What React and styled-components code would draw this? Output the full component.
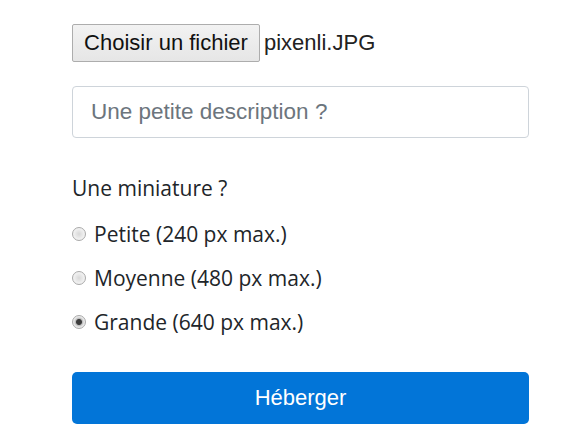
import styled, { createGlobalStyle } from "styled-components";

const Global = createGlobalStyle`
    html, body {
        margin: 0;
        padding: 0;
        background: #FFFFFF;
    }
`;

const sizes = [
    { id: "petite", label: "Petite (240 px max.)" },
    { id: "moyenne", label: "Moyenne (480 px max.)" },
    { id: "grande", label: "Grande (640 px max.)", checked: true }
];

export default function App() {
    return (
        <>
            <Global />
            <Form onSubmit={e => e.preventDefault()}>
                <FileRow>
                    <FileButton type="button">Choisir un fichier</FileButton>
                    <FileName>pixenli.JPG</FileName>
                </FileRow>
                <Description placeholder="Une petite description ?" />
                <Fieldset>
                    <Legend>Une miniature ?</Legend>
                    {sizes.map(size => (
                        <Choice key={size.id}>
                            <Radio type="radio" name="size" defaultChecked={size.checked} />
                            <span>{size.label}</span>
                        </Choice>
                    ))}
                </Fieldset>
                <Submit type="submit">Héberger</Submit>
            </Form>
        </>
    );
}

const Form = styled.form`
    display: flex;
    flex-direction: column;
    width: 457px;
    padding: 24px 0 0 72px;
`;

const FileRow = styled.div`
    display: flex;
    align-items: center;
    gap: 4px;
    height: 38px;
`;

const FileButton = styled.button`
    width: 188px;
    height: 38px;
    padding: 0;
    border: 1px solid #ADADAD;
    border-radius: 2px;
    background: linear-gradient(#F2F2F2, #E6E6E6);
    font-family: "Liberation Sans", Arial, sans-serif;
    font-size: 22px;
    color: #111111;
`;

const FileName = styled.span`
    font-family: "Liberation Sans", Arial, sans-serif;
    font-size: 22px;
    color: #222222;
`;

const Description = styled.input`
    box-sizing: border-box;
    margin-top: 24px;
    width: 100%;
    height: 52px;
    padding: 0 18px;
    border: 1px solid #CED4DA;
    border-radius: 4px;
    font-family: "Liberation Sans", Arial, sans-serif;
    font-size: 22.5px;
    color: #495057;

    &::placeholder {
        color: #6C757D;
    }
`;

const Fieldset = styled.fieldset`
    margin: 36px 0 0;
    padding: 0;
    border: none;
    display: flex;
    flex-direction: column;
    font-family: "Open Sans", "Noto Sans", sans-serif;
    font-size: 21px;
    color: #212529;
`;

const Legend = styled.div`
    line-height: 28px;
    margin-bottom: 10px;
`;

const Choice = styled.label`
    display: flex;
    align-items: center;
    gap: 8px;
    height: 44px;
`;

const Radio = styled.input`
    appearance: none;
    box-sizing: border-box;
    margin: 0;
    width: 14px;
    height: 14px;
    border: 1px solid #A9A9A9;
    border-radius: 50%;
    background: radial-gradient(circle, #D8D8D8 0%, #EEEEEE 55%, #F8F8F8 100%);

    &:checked {
        background: radial-gradient(circle, #3C3C3C 0 2.5px, #BDBDBD 3.5px, #E6E6E6 5px, #F6F6F6 100%);
    }
`;

const Submit = styled.button`
    margin-top: 28px;
    width: 100%;
    height: 52px;
    border: none;
    border-radius: 5px;
    background: #0275D8;
    color: #FFFFFF;
    font-family: "Liberation Sans", Arial, sans-serif;
    font-size: 22px;
`;
